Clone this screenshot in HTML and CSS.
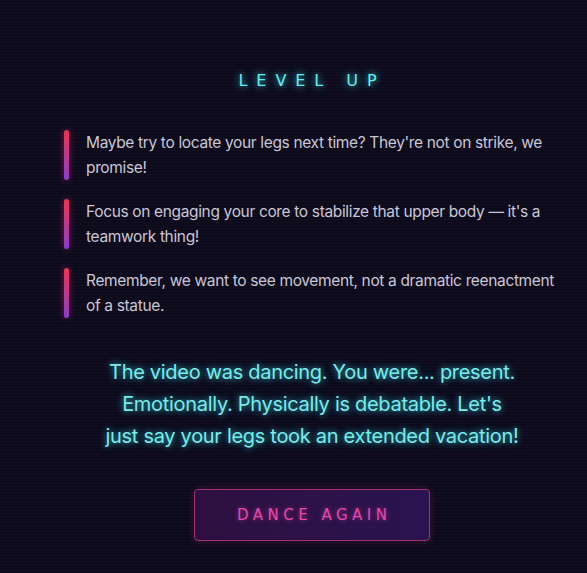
FILE: index.html
```html
<!DOCTYPE html>
<html>
    <head>
        <title>Level Up</title>
        <link rel="stylesheet" href="styles.css">
    </head>
    <body>
        <div class="feedback">
            <h2 class="level_title">Level Up</h2>

            <ul class="tips">
                <li class="tip">Maybe try to locate your legs next time? They're not on strike, we promise!</li>
                <li class="tip">Focus on engaging your core to stabilize that upper body — it's a teamwork thing!</li>
                <li class="tip">Remember, we want to see movement, not a dramatic reenactment of a statue.</li>
            </ul>

            <p class="verdict">The video was dancing. You were... present. Emotionally. Physically is debatable. Let's<br />just say your legs took an extended vacation!</p>

            <div class="actions">
                <button type="button" class="retry_btn">Dance Again</button>
            </div>
        </div>
    </body>
</html>
```

FILE: styles.css
```css
html, body {
	margin: 0;
	height: 100%;
}
body {
	background-color: #0d0a1c;
	background-image: repeating-linear-gradient(
		to bottom,
		rgba(255, 255, 255, 0.018) 0,
		rgba(255, 255, 255, 0.018) 1px,
		transparent 1px,
		transparent 3px
	);
	font-family: "Inter", "Liberation Sans", sans-serif;
	color: #c9c6d6;
}
.feedback {
	padding: 71px 27px 0 64px;
	display: flex;
	flex-direction: column;
}
.level_title {
	margin: 0 0 40px 0;
	text-align: center;
	font-family: "DejaVu Sans", sans-serif;
	font-weight: normal;
	font-size: 16px;
	letter-spacing: 0.56em;
	text-transform: uppercase;
	color: #62eef0;
	text-shadow: 0 0 6px rgba(60, 230, 240, 0.8), 0 0 14px rgba(60, 230, 240, 0.4);
}
.tips {
	list-style: none;
	margin: 0;
	padding: 0;
	display: flex;
	flex-direction: column;
	gap: 19px;
}
.tip {
	position: relative;
	padding-left: 22px;
	font-size: 15.5px;
	letter-spacing: -0.35px;
	line-height: 25px;
}
/* neon bar on the left of every tip */
.tip::before {
	content: "";
	position: absolute;
	left: 0;
	top: 0;
	width: 5px;
	height: 50px;
	border-radius: 3px;
	background: linear-gradient(to bottom, #f0344e, #8b3ccc);
	box-shadow: 0 0 6px rgba(220, 50, 120, 0.55);
}
.verdict {
	align-self: center;
	max-width: 440px;
	margin: 38px 0 0 0;
	text-align: center;
	font-size: 20px;
	letter-spacing: -0.3px;
	line-height: 32px;
	color: #78ecec;
	text-shadow: 0 0 6px rgba(60, 220, 230, 0.7), 0 0 12px rgba(60, 220, 230, 0.3);
}
.actions {
	display: flex;
	justify-content: center;
	margin-top: 37px;
}
.retry_btn {
	width: 236px;
	height: 52px;
	border: 1px solid #a3306f;
	border-radius: 4px;
	background: linear-gradient(to right, #2d1040, #2a1450);
	font-family: "DejaVu Sans", sans-serif;
	font-size: 15px;
	letter-spacing: 0.3em;
	text-indent: 0.3em;
	text-transform: uppercase;
	color: #e548a8;
	text-shadow: 0 0 5px rgba(230, 70, 170, 0.6);
	box-shadow: 0 0 8px rgba(200, 40, 140, 0.25);
}
```
